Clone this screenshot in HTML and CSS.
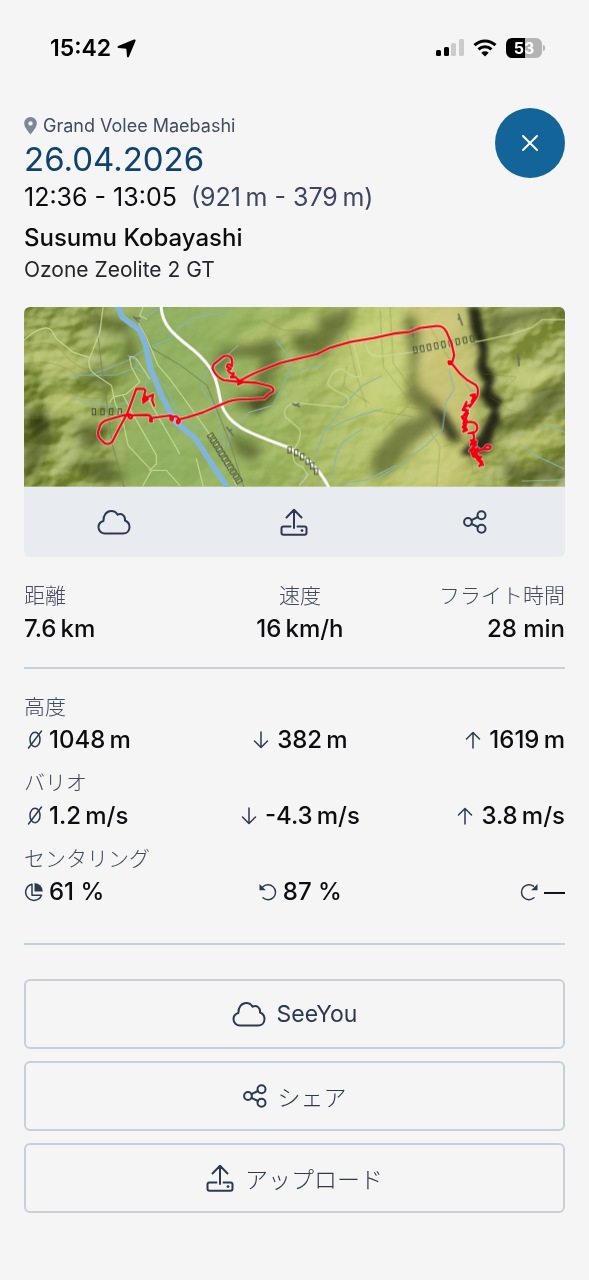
FILE: index.html
```html
<!DOCTYPE html>
<html lang="ja">
<head>
    <meta charset="UTF-8">
    <meta name="viewport" content="width=device-width, initial-scale=1.0">
    <title>Flight 26.04.2026</title>
    <link rel="stylesheet" href="styles.css">
</head>
<body>
    <!-- Shared icons -->
    <svg class="sprite" aria-hidden="true">
        <symbol id="i-cloud" viewBox="0 0 34 26">
            <path d="M8 24.500C4.500 24.500 1.500 21.800 1.500 18.200C1.500 15.200 3.500 12.800 6.400 12C6.200 6.500 9.500 2 14.200 2C17.200 2 19.300 3.300 20.600 5.700C24.500 3.800 28.500 6.500 28 11.500C30.800 12.600 32.500 15 32.500 18C32.500 21.800 29.700 24.500 26 24.500Z"/>
        </symbol>
        <symbol id="i-upload" viewBox="0 0 28 28">
            <path d="M14 20V2M6.500 9.500L14 1.800L21.500 9.500M10.500 18.500H3.500Q1.500 18.500 1.500 20.500V24.500Q1.500 26.700 3.500 26.700H24.500Q26.500 26.700 26.500 24.500V20.500Q26.500 18.500 24.500 18.500H17.500"/>
            <circle class="dot" cx="22" cy="22.600" r="1.400"/>
        </symbol>
        <symbol id="i-share" viewBox="0 0 24 24">
            <circle cx="5" cy="12" r="3.900"/>
            <circle cx="18.500" cy="5.200" r="4"/>
            <circle cx="18.500" cy="18.800" r="4"/>
            <path d="M8.500 10.200L15 7M8.500 13.800L15 17"/>
        </symbol>
        <symbol id="i-avg" viewBox="0 0 20 20">
            <ellipse cx="11" cy="9.500" rx="5" ry="7.300"/>
            <path d="M4.500 18L17.500 1"/>
        </symbol>
        <symbol id="i-down" viewBox="0 0 20 20">
            <path d="M9 2V17.500M2.500 11L9 17.500L15.500 11"/>
        </symbol>
        <symbol id="i-up" viewBox="0 0 20 20">
            <path d="M9 18V2.500M2.500 9L9 2.500L15.500 9"/>
        </symbol>
        <symbol id="i-pie" viewBox="0 0 20 20">
            <path d="M8 2.200A8.200 8.200 0 1 0 17.500 13.200H8Z"/>
            <path class="fill" d="M10.500 1A8.500 8.500 0 0 1 18.800 9.500H10.500Z"/>
        </symbol>
        <symbol id="i-left" viewBox="0 0 20 20">
            <path d="M4.500 5.200A7.500 7.500 0 1 1 5 15.800"/>
            <path class="fill" d="M1.500 2L1.500 8.300H7.800Z"/>
        </symbol>
        <symbol id="i-right" viewBox="0 0 20 20">
            <path d="M14.500 4.200A7.500 7.500 0 1 0 15 15.800"/>
            <path class="fill" d="M18.500 2L18.500 8.300H12.200Z"/>
        </symbol>
    </svg>

    <div class="status-bar">
        <div class="clock">
            <span>15:42</span>
            <svg width="19" height="19" viewBox="0 0 19 19"><path d="M17 .6Q19 0 18.500 2L12 17.500Q10.800 19.500 10 17.400L9.300 9.700L1.600 9Q-.5 8.200 1.200 7Z"/></svg>
        </div>
        <div class="signals">
            <svg width="28" height="18" viewBox="0 0 28 18">
                <rect x="0" y="11" width="5" height="6" rx="1.500"/>
                <rect x="8" y="8" width="5" height="9" rx="1.500"/>
                <rect class="off" x="15" y="4" width="5" height="13" rx="1.500"/>
                <rect class="off" x="23" y="0" width="5" height="17" rx="1.500"/>
            </svg>
            <svg width="24" height="18" viewBox="0 0 24 18">
                <path class="wave" d="M1.500 6.200C7.500.5 16.500.5 22.500 6.200M5.500 10.400C9.300 7 14.700 7 18.500 10.400"/>
                <path d="M8.300 13.700Q12 10.800 15.700 13.700L12 17.500Z"/>
            </svg>
            <div class="battery"><span>53</span></div>
        </div>
    </div>

    <main class="container">
        <header class="flight-head">
            <div class="flight-info">
                <div class="place">
                    <svg width="14" height="18" viewBox="0 0 14 18"><path fill-rule="evenodd" d="M6.500 0A6.300 6.300 0 0 1 12.800 6.300C12.800 10 9 14.500 6.500 17.500C4 14.500.2 10 .2 6.300A6.300 6.300 0 0 1 6.500 0ZM6.500 4.200A2.200 2.200 0 1 0 6.500 8.600A2.200 2.200 0 1 0 6.500 4.200Z"/></svg>
                    <span>Grand Volee Maebashi</span>
                </div>
                <h1>26.04.2026</h1>
                <div class="times">12:36 - 13:05&nbsp; <span>(921&#8239;m - 379&#8239;m)</span></div>
                <div class="pilot">Susumu Kobayashi</div>
                <div class="glider">Ozone Zeolite 2 GT</div>
            </div>
            <button class="close" aria-label="閉じる">
                <svg width="18" height="18" viewBox="0 0 18 18"><path d="M2 2L16 16M16 2L2 16"/></svg>
            </button>
        </header>

        <!-- Map with track -->
        <section class="card">
            <svg class="map" viewBox="0 0 1626 540" preserveAspectRatio="xMidYMid slice">
                <defs>
                    <linearGradient id="land" x1="0" x2="1" y1="0" y2="0">
                        <stop offset="0" stop-color="#9aa858"/>
                        <stop offset=".14" stop-color="#9bac5c"/>
                        <stop offset=".25" stop-color="#93b264"/>
                        <stop offset=".42" stop-color="#9cb562"/>
                        <stop offset=".58" stop-color="#b0c06b"/>
                        <stop offset=".68" stop-color="#bec974"/>
                        <stop offset=".78" stop-color="#c2c477"/>
                        <stop offset=".86" stop-color="#a9b364"/>
                        <stop offset="1" stop-color="#a6b163"/>
                    </linearGradient>
                    <filter id="soft" x="-30%" y="-30%" width="160%" height="160%"><feGaussianBlur stdDeviation="14"/></filter>
                    <filter id="ridge" x="-40%" y="-20%" width="180%" height="140%"><feGaussianBlur stdDeviation="8"/></filter>
                    <filter id="relief" x="0" y="0" width="100%" height="100%" color-interpolation-filters="sRGB">
                        <feTurbulence type="fractalNoise" baseFrequency=".006 .008" numOctaves="4" seed="5"/>
                        <feGaussianBlur stdDeviation="3"/>
                        <feDiffuseLighting surfaceScale="36" lighting-color="#fff"><feDistantLight azimuth="225" elevation="26"/></feDiffuseLighting>
                    </filter>
                    <linearGradient id="hills">
                        <stop offset="0" stop-color="#fff"/>
                        <stop offset=".14" stop-color="#bbb"/>
                        <stop offset=".2" stop-color="#222"/>
                        <stop offset=".38" stop-color="#222"/>
                        <stop offset=".46" stop-color="#555"/>
                        <stop offset=".8" stop-color="#555"/>
                        <stop offset=".9" stop-color="#ccc"/>
                        <stop offset="1" stop-color="#eee"/>
                    </linearGradient>
                    <mask id="hillmask" maskUnits="userSpaceOnUse" x="0" y="0" width="1626" height="540"><rect width="1626" height="540" fill="url(#hills)"/></mask>
                    <rect id="box" x="-5" y="-9" width="10" height="18"/>
                </defs>

                <rect width="1626" height="540" fill="url(#land)"/>
                <g class="relief" mask="url(#hillmask)"><rect x="-60" y="-60" width="1746" height="660" filter="url(#relief)"/></g>

                <!-- Lit slopes -->
                <g class="light" filter="url(#soft)">
                    <path d="M0 130Q80 70 150 130L190 190L100 210L10 190Z"/>
                    <path d="M60 240Q130 220 190 280L200 330L90 320Z"/>
                    <path d="M600 140L680 70L860 30L890 70L760 90L690 120Z"/>
                    <path d="M650 250L710 150L740 170L690 250Z"/>
                    <path d="M930 200L980 80L1040 10H1150L1170 200L1140 300L1060 340L1000 300Z"/>
                    <path d="M1200 480L1230 350L1290 390L1350 520L1330 540H1190Z"/>
                    <path d="M1430 160L1600 180L1570 250L1480 260Z"/>
                    <path d="M1470 400L1610 350L1620 400L1500 460Z"/>
                </g>
                <path class="sand" filter="url(#soft)" d="M1170 0L1310 0L1350 150L1360 320L1330 400L1260 330L1180 260L1200 100Z"/>

                <!-- Shaded slopes -->
                <g class="shade" filter="url(#soft)">
                    <path d="M0 310L60 300L90 370L60 450L20 520L0 500Z"/>
                    <path d="M170 200L270 190L260 230L170 225Z"/>
                    <path d="M190 20L310 40L340 150L300 190L310 80L200 60Z"/>
                    <path d="M160 350L260 360L220 430L170 420Z"/>
                    <path d="M560 180L600 120L690 110L760 90L770 170L730 240L690 230L710 150L620 150L590 210Z"/>
                    <path d="M640 270L740 240L760 270L700 325L640 300Z"/>
                    <path d="M800 80L890 70L880 30L990 0L980 50L900 150L820 140Z"/>
                    <path d="M1140 30L1170 20L1190 90L1175 230L1240 280L1320 390L1290 420L1230 340L1150 280L1160 150Z"/>
                    <path d="M1050 440L1130 350L1260 300L1270 330L1160 420L1100 500L1040 510Z"/>
                    <path d="M1410 360L1500 320L1560 240L1626 220V290L1560 330L1480 370L1410 390Z"/>
                    <path d="M1390 20L1626 0V20L1480 50L1400 110Z"/>
                    <path d="M1440 450L1510 490L1626 440V520L1450 540Z"/>
                    <path d="M620 380L720 420L690 470L640 440Z"/>
                    <path d="M130 470L260 460L300 520L230 530Z"/>
                </g>
                <g class="deep" filter="url(#ridge)">
                    <path d="M1335 0H1370L1380 60L1395 120L1390 170L1415 210L1405 250L1440 280L1425 310L1435 350L1400 370L1390 420L1360 440L1375 370L1405 310L1370 270L1385 230L1360 190L1370 130L1345 70Z"/>
                    <path d="M1375 380L1420 350L1400 430L1350 450L1310 440L1340 410Z"/>
                    <path opacity=".45" d="M20 330L60 330L70 360L30 390Z"/>
                    <path opacity=".6" d="M1220 300L1270 320L1310 400L1280 400Z"/>
                    <path opacity=".45" d="M680 285L740 245L755 270L700 320Z"/>
                </g>

                <!-- Contour lines -->
                <g class="contour">
                    <path d="M10 120Q80 90 120 140T210 190M0 170Q90 150 170 210T240 240M90 225Q170 290 240 270M970 80L1000 210L1030 300M1070 10L1080 180L1150 270M1100 0L1110 170L1160 240M970 180L960 240L1040 290M1220 60L1280 160L1350 260M1200 340L1250 420L1240 540M1260 420L1310 400L1370 450M1430 130L1480 160L1530 120M1400 270L1460 310L1550 330M1380 200L1480 210L1450 240M1340 430L1350 500M720 40L780 70L850 70M1080 370L1150 300L1220 310M1050 310L1170 330L1140 370"/>
                </g>

                <!-- Streams -->
                <g class="stream">
                    <g transform="translate(-12 -24)">
                        <path d="M165 230L210 228L270 207L330 182L380 148L450 120L480 85L520 58L580 45M210 230L290 228L350 205M165 295L200 315L240 315L290 322L340 300M372 150L385 220L375 270M400 220L440 270L470 330L500 370L560 395M325 170L350 185L350 210L370 220M360 65L400 40L430 22"/>
                    </g>
                    <g transform="translate(528 -24)">
                        <path d="M0 50L50 45L85 35M115 140L60 190L20 220L5 270L40 320L60 370L75 440L60 470M230 125L265 170L270 210L255 250L220 320L150 340L90 400L85 450M255 240L310 210L370 200M545 232L490 260L440 310L410 350L375 395L340 490L300 560M380 395L430 370L480 350L550 330M490 390L430 430L410 470L400 530L360 560M420 555L500 545L590 500"/>
                    </g>
                    <g transform="translate(1068 -24)">
                        <path d="M210 215L225 270L200 310L190 390L140 440L60 500L0 535M485 382L520 385L555 400M430 440L480 475L555 510M430 547L555 543"/>
                    </g>
                </g>

                <!-- River -->
                <path class="river" d="M282 0L295 30L348 70L366 115L382 190L415 270L455 345L515 395L560 465L610 540"/>

                <!-- Railway and minor roads -->
                <g class="rail">
                    <path d="M212 0L235 190L265 410L300 540M345 45L385 125L470 175L550 235L620 410L660 540"/>
                </g>
                <g class="road" transform="translate(-12 -24)">
                    <path d="M10 125Q75 70 95 95L110 120L160 160L205 175M250 22L240 100L207 185Q205 215 230 230L275 260L285 310L310 370L325 440L395 515L370 560M270 310L280 295L320 285L360 250L335 205L330 180Q330 165 350 180L390 240M310 290L350 365L410 470V495L390 515H440L480 560M385 300L425 370L480 465M350 60L380 115L415 200L450 240L530 350L600 450L650 560M370 22L360 50L380 60M530 480L550 560"/>
                </g>
                <g class="road" transform="translate(528 -24)">
                    <path d="M460 130Q480 200 485 230Q470 245 430 212Q405 205 385 250Q380 265 440 290Q460 310 430 325L290 312Q245 320 258 355L300 390Q310 410 285 450Q270 495 310 505L325 530L300 560M500 135Q505 175 545 172L640 160L850 125L940 105L1000 85L1030 62H1098"/>
                </g>
                <path class="highway" d="M412 0C415 60 460 90 510 130C580 190 580 230 592 290C615 360 680 380 790 420C860 455 895 500 915 540"/>

                <!-- Map lettering -->
                <g class="lettering">
                    <use href="#box" x="210" y="315"/><use href="#box" x="236" y="315"/><use href="#box" x="262" y="315"/><use href="#box" x="288" y="315"/>
                    <g transform="translate(1176 129) rotate(-11)">
                        <use href="#box"/><use href="#box" x="21"/><use href="#box" x="42"/><use href="#box" x="64"/><use href="#box" x="86"/><use href="#box" x="108"/><use href="#box" x="130"/><use href="#box" x="152"/><use href="#box" x="174"/>
                    </g>
                    <g>
                        <use href="#box" x="798" y="430"/><use href="#box" x="818" y="438"/><use href="#box" x="836" y="450"/><use href="#box" x="852" y="464"/><use href="#box" x="866" y="478"/><use href="#box" x="878" y="494"/>
                    </g>
                    <g transform="translate(561 387) rotate(58)">
                        <use href="#box"/><use href="#box" x="16"/><use href="#box" x="32"/><use href="#box" x="48"/><use href="#box" x="64"/><use href="#box" x="80"/><use href="#box" x="96"/><use href="#box" x="112"/><use href="#box" x="128"/><use href="#box" x="144"/><use href="#box" x="160"/>
                    </g>
                    <path class="scribble" d="M328 28L345 46M332 32L350 36M806 290L830 300M812 296L828 290M608 360L630 388M614 372L626 368M1165 58L1170 90M1305 20L1318 56M1310 30L1304 38M1484 140L1488 178M1482 152L1492 158"/>
                </g>

                <!-- Flight track, drawn twice for the halo -->
                <defs>
                    <g id="track">
                        <path d="M391 297L385 280L388 263L370 272L358 288L372 278L364 268L357 280L365 250L360 246H337L328 272L311 318L285 366L265 405Q250 420 235 402Q215 385 226 365Q228 345 255 338L310 322Q320 345 325 330Q318 318 312 325L370 324Q385 325 384 345Q375 345 380 334L395 332L440 326Q452 330 445 342Q433 335 445 328L460 330Q475 345 462 350Q455 342 465 338L490 332L540 316L600 290Q630 276 662 278L722 275L735 262L748 255Q755 240 730 236L700 228L645 225L600 220Q578 212 566 184L570 172L600 148Q630 140 625 178Q612 165 610 180Q632 185 612 190Q622 205 630 198L628 212Q622 205 622 212L635 210L655 228L643 233L648 222L690 200L770 168L880 142L920 122L980 105L1052 93L1110 80L1162 74L1190 63L1240 57Q1260 55 1270 75L1285 110L1293 145L1287 165Q1270 158 1278 172Q1290 172 1282 165L1310 200L1330 218L1358 235Q1370 250 1360 272L1342 265L1355 262L1345 285L1358 275L1340 300L1345 292L1325 300L1330 285L1318 310L1334 310L1318 330L1332 322L1325 345L1315 330L1330 340L1318 362L1330 350L1320 375L1332 370L1320 348L1325 347Q1360 340 1362 360Q1365 380 1335 380L1350 376L1355 410L1342 400L1358 415L1340 432L1365 425L1350 440L1385 425Q1385 412 1402 418Q1405 430 1385 428L1355 432L1370 465L1380 475L1362 458L1375 450L1350 450L1345 436"/>
                        <path d="M1350 398L1342 415L1360 405L1345 428M1355 445L1378 472L1368 478L1378 465L1355 450M1325 305L1335 320M1358 440L1370 455L1374 470"/>
                    </g>
                </defs>
                <use href="#track" class="halo"/>
                <use href="#track" class="line"/>
            </svg>
            <div class="card-actions">
                <button aria-label="SeeYou"><svg class="icon" width="34" height="26"><use href="#i-cloud"/></svg></button>
                <button aria-label="アップロード"><svg class="icon" width="28" height="28"><use href="#i-upload"/></svg></button>
                <button aria-label="シェア"><svg class="icon" width="24" height="24"><use href="#i-share"/></svg></button>
            </div>
        </section>

        <section class="stats">
            <div class="row">
                <div><h2>距離</h2><p>7.6&#8239;km</p></div>
                <div><h2>速度</h2><p>16&#8239;km/h</p></div>
                <div><h2>フライト時間</h2><p>28 min</p></div>
            </div>
        </section>

        <hr>

        <section class="stats details">
            <div>
                <h2>高度</h2>
                <div class="row">
                    <p><svg class="mini"><use href="#i-avg"/></svg>1048&#8239;m</p>
                    <p><svg class="mini"><use href="#i-down"/></svg>382&#8239;m</p>
                    <p><svg class="mini"><use href="#i-up"/></svg>1619&#8239;m</p>
                </div>
            </div>
            <div>
                <h2>バリオ</h2>
                <div class="row">
                    <p><svg class="mini"><use href="#i-avg"/></svg>1.2&#8239;m/s</p>
                    <p><svg class="mini"><use href="#i-down"/></svg>-4.3&#8239;m/s</p>
                    <p><svg class="mini"><use href="#i-up"/></svg>3.8&#8239;m/s</p>
                </div>
            </div>
            <div>
                <h2>センタリング</h2>
                <div class="row">
                    <p><svg class="mini"><use href="#i-pie"/></svg>61 %</p>
                    <p><svg class="mini"><use href="#i-left"/></svg>87 %</p>
                    <p><svg class="mini"><use href="#i-right"/></svg><span class="none">—</span></p>
                </div>
            </div>
        </section>

        <hr class="wide">

        <div class="buttons">
            <button><svg class="icon" width="34" height="26"><use href="#i-cloud"/></svg>SeeYou</button>
            <button><svg class="icon" width="24" height="24"><use href="#i-share"/></svg><span>シェア</span></button>
            <button><svg class="icon" width="28" height="28"><use href="#i-upload"/></svg><span>アップロード</span></button>
        </div>
    </main>
</body>
</html>
```

FILE: styles.css
```css
/* General */
* {
    box-sizing: border-box;
}

body {
    margin: 0;
    background-color: #f5f5f5;
    color: #0c0d10;
    font-family: Inter, "Noto Sans CJK JP", sans-serif;
    font-size: 24px;
}

h1, h2, p {
    margin: 0;
}

button {
    font-family: inherit;
    color: #2c3a50;
    cursor: pointer;
}

.sprite {
    display: none;
}

/* Status bar */
.status-bar {
    display: flex;
    justify-content: space-between;
    align-items: center;
    height: 96px;
    padding: 0 47px 0 50px;
}

.clock, .signals {
    display: flex;
    align-items: center;
}

.clock {
    gap: 6px;
    font-size: 23px;
    font-weight: 600;
    color: #000;
}

.signals {
    gap: 9px;
}

.signals .off {
    fill: #cbcbcb;
}

.wave {
    fill: none;
    stroke: #000;
    stroke-width: 3;
}

.battery {
    position: relative;
    width: 36px;
    height: 20px;
    border-radius: 6px;
    background: linear-gradient(90deg, #000 53%, #b4b4b4 53%);
    color: #fff;
    font-size: 16px;
    font-weight: 700;
    line-height: 20px;
    text-align: center;
}

.battery::after {
    content: "";
    position: absolute;
    right: -3px;
    top: 7px;
    width: 2px;
    height: 6px;
    border-radius: 0 2px 2px 0;
    background-color: #b4b4b4;
}

/* Header */
.container {
    padding: 12px 24px 64px;
}

.flight-head {
    display: flex;
    justify-content: space-between;
    align-items: flex-start;
}

.flight-info {
    padding-top: 8px;
}

.place {
    display: flex;
    align-items: center;
    gap: 5px;
    font-size: 18px;
    line-height: 20px;
    color: #414c61;
}

.place svg {
    fill: #7d8798;
}

h1 {
    font-size: 33px;
    font-weight: 400;
    line-height: 46px;
    color: #0f426d;
}

.times {
    font-size: 25px;
    line-height: 30px;
}

.times span {
    color: #3b4660;
}

.pilot {
    margin-top: 10px;
    font-weight: 500;
    line-height: 32px;
}

.glider {
    font-size: 21px;
    line-height: 32px;
    color: #23262e;
}

.close {
    display: flex;
    align-items: center;
    justify-content: center;
    flex-shrink: 0;
    width: 70px;
    height: 70px;
    padding: 0;
    border: none;
    border-radius: 50%;
    background-color: #136499;
}

.close path {
    fill: none;
    stroke: #fff;
    stroke-width: 2;
    stroke-linecap: round;
}

/* Map card */
.card {
    margin-top: 21px;
    border-radius: 6px;
    overflow: hidden;
    background-color: #e8ebf0;
}

.map {
    display: block;
    width: 100%;
}

.map .relief { mix-blend-mode: soft-light; opacity: .95; }
.map .light { fill: #d3d983; opacity: .45; }
.map .sand { fill: #d2c87c; opacity: .6; }
.map .shade { fill: #414a1c; opacity: .58; }
.map .deep { fill: #14160c; opacity: .88; }

.contour, .stream, .river, .rail, .road, .highway, .halo, .line {
    fill: none;
    stroke-linecap: round;
    stroke-linejoin: round;
}

.contour { stroke: #75813f; stroke-width: 2; opacity: .5; }
.stream { stroke: #89b5ae; stroke-width: 4; opacity: .8; }
.river { stroke: #82b5dc; stroke-width: 17; }
.rail { stroke: #7a8460; stroke-width: 4; opacity: .7; }
.road { stroke: #cfdca0; stroke-width: 4; opacity: .75; }
.highway { stroke: #fff; stroke-width: 9; }

.lettering {
    fill: none;
    stroke: #4f5540;
    stroke-width: 3;
}

.lettering .scribble { stroke: #6b7062; stroke-width: 5; }

.halo { stroke: #fff; stroke-width: 11; opacity: .6; }
.line { stroke: #f20010; stroke-width: 7; }

.card-actions {
    display: grid;
    grid-template-columns: repeat(3, 1fr);
    height: 70px;
}

.card-actions button {
    display: flex;
    align-items: center;
    justify-content: center;
    border: none;
    background: none;
}

/* Icons */
.icon, .mini {
    fill: none;
    stroke: #2c3a50;
    stroke-width: 2;
    stroke-linecap: round;
    stroke-linejoin: round;
    flex-shrink: 0;
}

.mini {
    width: 20px;
    height: 20px;
    stroke-width: 1.500;
}

.dot, .fill {
    fill: #2c3a50;
    stroke: none;
}

/* Stats */
.stats {
    margin-top: 22px;
}

.row {
    display: grid;
    grid-template-columns: 35% 32% 33%;
}

.row > :nth-child(2) {
    justify-content: center;
    text-align: center;
}

.row > :nth-child(3) {
    justify-content: flex-end;
    text-align: right;
}

h2 {
    font-size: 21px;
    font-weight: 300;
    line-height: 34px;
    color: #3f4b60;
}

.row p {
    font-weight: 500;
    line-height: 32px;
}

.row .none {
    font-size: 21px;
}

.details {
    display: grid;
    gap: 10px;
    margin-top: 21px;
}

.details p {
    display: flex;
    align-items: center;
    gap: 5px;
}

hr {
    height: 2px;
    margin: 22px 0 0;
    border: none;
    background-color: #c6d0dc;
}

hr.wide {
    margin-top: 35px;
}

/* Buttons */
.buttons {
    display: grid;
    gap: 12px;
    margin-top: 34px;
}

.buttons button {
    display: flex;
    align-items: center;
    justify-content: center;
    gap: 11px;
    height: 70px;
    border: 2px solid #c6d0dc;
    border-radius: 6px;
    background: none;
    font-size: 23px;
}

.buttons span {
    font-weight: 300;
}
```
